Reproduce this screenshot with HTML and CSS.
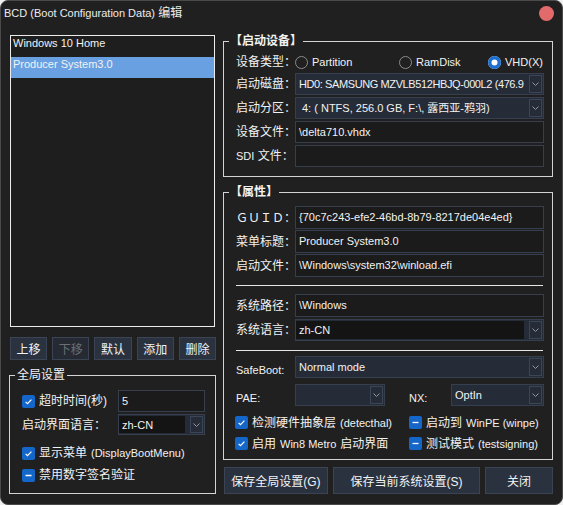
FILE: index.html
```html
<!DOCTYPE html>
<html lang="zh-CN">
<head>
    <meta charset="UTF-8">
    <title>BCD 编辑</title>
    <link rel="stylesheet" href="styles.css">
</head>
<body>
    <div class="window">
        <div class="titlebar">
            <span class="title"><span class="en">BCD (Boot Configuration Data)</span> 编辑</span>
            <span class="close"></span>
        </div>
        <div class="main">
            <div class="left">
                <ul class="entries">
                    <li>Windows 10 Home</li>
                    <li class="selected">Producer System3.0</li>
                </ul>
                <div class="entry-buttons">
                    <button class="btn">上移</button>
                    <button class="btn" disabled>下移</button>
                    <button class="btn">默认</button>
                    <button class="btn">添加</button>
                    <button class="btn">删除</button>
                </div>
                <fieldset class="group global">
                    <legend>全局设置</legend>
                    <div class="grow first">
                        <span class="cb"><span class="box"><svg width="13" height="13" viewBox="0 0 13 13"><path d="M3.6 6.9 5.5 8.7 9.4 4.7" stroke="#fff" stroke-width="1.2" fill="none"/></svg></span>超时时间(秒)</span>
                        <div class="field">5</div>
                    </div>
                    <div class="grow second">
                        <span>启动界面语言：</span>
                        <div class="combo edit">
                            <span class="value">zh-CN</span>
                            <span class="arrow"><svg width="7" height="4" viewBox="0 0 7 4"><path d="M.5.5 3.5 3.5 6.5.5" stroke="#8f98a4" fill="none"/></svg></span>
                        </div>
                    </div>
                    <span class="cb line"><span class="box"><svg width="13" height="13" viewBox="0 0 13 13"><path d="M3.6 6.9 5.5 8.7 9.4 4.7" stroke="#fff" stroke-width="1.2" fill="none"/></svg></span>显示菜单 <span class="en">(DisplayBootMenu)</span></span>
                    <span class="cb line"><span class="box"><svg width="13" height="13" viewBox="0 0 13 13"><path d="M3.5 6.5h6" stroke="#fff" stroke-width="1.3"/></svg></span>禁用数字签名验证</span>
                </fieldset>
            </div>

            <div class="right">
                <fieldset class="group device">
                    <legend class="bold">【启动设备】</legend>
                    <div class="radios">
                        <span class="label">设备类型：</span>
                        <span class="radio"><i></i>Partition</span>
                        <span class="radio"><i></i>RamDisk</span>
                        <span class="radio on"><i></i>VHD(X)</span>
                    </div>
                    <div class="row">
                        <span class="label">启动磁盘：</span>
                        <div class="combo">
                            <span class="value tight">HD0: SAMSUNG MZVLB512HBJQ-000L2 (476.9</span>
                            <span class="arrow"><svg width="7" height="4" viewBox="0 0 7 4"><path d="M.5.5 3.5 3.5 6.5.5" stroke="#8f98a4" fill="none"/></svg></span>
                        </div>
                    </div>
                    <div class="row">
                        <span class="label">启动分区：</span>
                        <div class="combo">
                            <span class="value indent">4: ( NTFS, 256.0 GB, F:\, 露西亚-鸦羽)</span>
                            <span class="arrow"><svg width="7" height="4" viewBox="0 0 7 4"><path d="M.5.5 3.5 3.5 6.5.5" stroke="#8f98a4" fill="none"/></svg></span>
                        </div>
                    </div>
                    <div class="row">
                        <span class="label">设备文件：</span>
                        <div class="field">\delta710.vhdx</div>
                    </div>
                    <div class="row">
                        <span class="label"><span class="en">SDI</span> 文件：</span>
                        <div class="field"></div>
                    </div>
                </fieldset>

                <fieldset class="group props">
                    <legend class="bold">【属性】</legend>
                    <div class="row tall">
                        <span class="label">ＧＵＩＤ：</span>
                        <div class="field">{70c7c243-efe2-46bd-8b79-8217de04e4ed}</div>
                    </div>
                    <div class="row tall">
                        <span class="label">菜单标题：</span>
                        <div class="field">Producer System3.0</div>
                    </div>
                    <div class="row tall">
                        <span class="label">启动文件：</span>
                        <div class="field">\Windows\system32\winload.efi</div>
                    </div>
                    <hr class="sep first">
                    <div class="row tall path">
                        <span class="label">系统路径：</span>
                        <div class="field">\Windows</div>
                    </div>
                    <div class="row">
                        <span class="label">系统语言：</span>
                        <div class="combo edit">
                            <span class="value">zh-CN</span>
                            <span class="arrow"><svg width="7" height="4" viewBox="0 0 7 4"><path d="M.5.5 3.5 3.5 6.5.5" stroke="#8f98a4" fill="none"/></svg></span>
                        </div>
                    </div>
                    <hr class="sep second">
                    <div class="row safe">
                        <span class="label low en">SafeBoot:</span>
                        <div class="combo">
                            <span class="value">Normal mode</span>
                            <span class="arrow"><svg width="7" height="4" viewBox="0 0 7 4"><path d="M.5.5 3.5 3.5 6.5.5" stroke="#8f98a4" fill="none"/></svg></span>
                        </div>
                    </div>
                    <div class="row pae">
                        <span class="label low en">PAE:</span>
                        <div class="combo pae-box">
                            <span class="value"></span>
                            <span class="arrow"><svg width="7" height="4" viewBox="0 0 7 4"><path d="M.5.5 3.5 3.5 6.5.5" stroke="#8f98a4" fill="none"/></svg></span>
                        </div>
                        <span class="nx-label low en">NX:</span>
                        <div class="combo">
                            <span class="value">OptIn</span>
                            <span class="arrow"><svg width="7" height="4" viewBox="0 0 7 4"><path d="M.5.5 3.5 3.5 6.5.5" stroke="#8f98a4" fill="none"/></svg></span>
                        </div>
                    </div>
                    <div class="checks">
                        <span class="cb"><span class="box"><svg width="13" height="13" viewBox="0 0 13 13"><path d="M3.6 6.9 5.5 8.7 9.4 4.7" stroke="#fff" stroke-width="1.2" fill="none"/></svg></span>检测硬件抽象层<span class="en">(detecthal)</span></span>
                        <span class="cb"><span class="box"><svg width="13" height="13" viewBox="0 0 13 13"><path d="M3.5 6.5h6" stroke="#fff" stroke-width="1.3"/></svg></span>启动到 <span class="en">WinPE (winpe)</span></span>
                        <span class="cb"><span class="box"><svg width="13" height="13" viewBox="0 0 13 13"><path d="M3.6 6.9 5.5 8.7 9.4 4.7" stroke="#fff" stroke-width="1.2" fill="none"/></svg></span>启用 <span class="en">Win8 Metro</span> 启动界面</span>
                        <span class="cb"><span class="box"><svg width="13" height="13" viewBox="0 0 13 13"><path d="M3.5 6.5h6" stroke="#fff" stroke-width="1.3"/></svg></span>测试模式 <span class="en">(testsigning)</span></span>
                    </div>
                </fieldset>

                <div class="bottom-buttons">
                    <button class="btn save-global">保存全局设置(G)</button>
                    <button class="btn save-current">保存当前系统设置(S)</button>
                    <button class="btn close-btn">关闭</button>
                </div>
            </div>
        </div>
    </div>
</body>
</html>
```

FILE: styles.css
```css
body {
    margin: 0;
    background-color: #f0f0f0;
    color: #f2f2f2;
    font-family: "Liberation Sans", "Noto Sans CJK SC", sans-serif;
    font-size: 12px;
    line-height: 16px;
}
/* latin runs are a touch narrower than the CJK glyphs */
.en {
    font-size: 11px;
}
.window {
    width: 563px;
    height: 505px;
    box-sizing: border-box;
    background-color: #202020;
    border: 1px solid #4a4a4a;
    border-radius: 8px;
    overflow: hidden;
}
.titlebar {
    height: 32px;
    display: flex;
    justify-content: space-between;
    align-items: flex-start;
}
.title {
    margin: 4px 0 0 3px;
    line-height: 17px;
    color: #ececec;
}
.close {
    width: 15px;
    height: 15px;
    margin: 5px 8px 0 0;
    border-radius: 50%;
    background-color: #e26a6a;
}
.main {
    display: flex;
    gap: 7px;
    padding-left: 8px;
}
.left {
    width: 207px;
    display: flex;
    flex-direction: column;
}
.right {
    width: 330px;
    display: flex;
    flex-direction: column;
}

/* list of boot entries */
.entries {
    list-style: none;
    margin: 2px 0 0 1px;
    padding: 0;
    width: 205px;
    height: 292px;
    box-sizing: border-box;
    border: 1px solid #ececec;
    background-color: #1e1e1e;
    font-size: 11px;
}
.entries li {
    height: 21px;
    line-height: 15px;
    padding-left: 2px;
}
.entries .selected {
    background-color: #68a0e2;
}

.btn {
    font-family: inherit;
    font-size: 12px;
    color: #f2f2f2;
    background-color: #2a3240;
    border: 1px solid #3a4454;
    padding: 0;
    cursor: pointer;
}
.btn:disabled {
    color: #6b6f75;
    background-color: #262b33;
}
.entry-buttons {
    display: flex;
    gap: 5px;
    margin: 10px 0 0 1px;
    height: 23px;
}
.entry-buttons .btn {
    flex: 1;
}

/* group boxes */
.group {
    margin: 0;
    border: 1px solid #d4d4d4;
    min-width: 0;
}
.group legend {
    padding: 0 1px;
    line-height: 16px;
}
.group .bold {
    font-weight: bold;
}
.global {
    margin-top: 7px;
    padding: 7px 9px 8px 12px;
}
.global legend {
    margin-left: -7px;
    padding: 0 2px;
}
.device {
    padding: 4px 8px 9px 12px;
}
.device legend,
.props legend {
    margin-left: -7px;
}
.props {
    margin-top: 7px;
    padding: 4px 8px 5px 12px;
}

.grow {
    display: grid;
    grid-template-columns: 96px 87px;
    align-items: center;
}
.grow.first {
    height: 22px;
}
.grow.second {
    height: 21px;
    margin-top: 2px;
}
.global .line {
    height: 20px;
}
.global .line:nth-of-type(1) {
    margin-top: 8px;
}
.cb.line + .cb.line {
    margin-top: 2px;
}

.row {
    display: flex;
    align-items: center;
    height: 22px;
    margin-top: 2px;
}
.row.tall {
    height: 23px;
}
.row.tall + .row.tall {
    margin-top: 1px;
}
.row.path {
    margin-top: 8px;
}
.row.safe {
    margin-top: 5px;
}
.row.pae {
    margin-top: 6px;
}
.label {
    width: 59px;
    flex: none;
    white-space: nowrap;
}
.low {
    margin-top: 6px;
}
.nx-label {
    width: 42px;
    margin-left: 24px;
}

.radios {
    display: grid;
    grid-template-columns: 59px 104px 89px 1fr;
    align-items: center;
    height: 18px;
}
.radio {
    display: flex;
    align-items: center;
    gap: 4px;
    font-size: 11px;
}
.radio i {
    width: 13px;
    height: 13px;
    box-sizing: border-box;
    border: 1px solid #8a8a8a;
    border-radius: 50%;
}
.radio.on i {
    border: none;
    background-color: #fff;
    box-shadow: inset 0 0 0 3.5px #1a6fd0;
}

.field {
    flex: 1;
    height: 100%;
    box-sizing: border-box;
    border: 1px solid #353f4d;
    background-color: #1b1b1b;
    padding: 0 3px;
    line-height: 20px;
    font-size: 11px;
    white-space: nowrap;
    overflow: hidden;
}
.combo {
    flex: 1;
    height: 100%;
    box-sizing: border-box;
    display: flex;
    border: 1px solid #353f4d;
    background-color: #252c38;
    overflow: hidden;
}
.combo .value {
    flex: 1;
    padding-left: 3px;
    line-height: 20px;
    font-size: 11px;
    white-space: nowrap;
    overflow: hidden;
}
.combo .tight {
    letter-spacing: -0.4px;
}
.combo .indent {
    padding-left: 6px;
}
.combo .arrow {
    width: 13px;
    flex: none;
    margin: 1px 1px 1px 2px;
    box-sizing: border-box;
    border: 1px solid #3a4556;
    display: flex;
    align-items: center;
    justify-content: center;
}
.combo.edit .value {
    margin: 1px 3px 1px 0;
    padding-left: 3px;
    line-height: 18px;
    background-color: #141414;
}
.pae-box {
    flex: none;
    width: 90px;
}

.sep {
    margin: 0;
    border: none;
    border-top: 1px solid #e6e6e6;
    margin-right: 1px;
}
.sep.first {
    margin-top: 8px;
}
.sep.second {
    margin-top: 9px;
}

.cb {
    display: flex;
    align-items: center;
    gap: 4px;
    white-space: nowrap;
}
.cb .box {
    width: 13px;
    height: 13px;
    flex: none;
    border-radius: 2px;
    background-color: #1466c9;
    display: flex;
}
.checks {
    display: grid;
    grid-template-columns: 174px 1fr;
    grid-auto-rows: 21px;
    align-items: center;
    margin: 6px 0 0 -1px;
}

.bottom-buttons {
    display: flex;
    gap: 5px;
    margin: 7px 0 0 1px;
    height: 27px;
}
.save-global {
    width: 104px;
}
.save-current {
    width: 148px;
}
.close-btn {
    width: 68px;
}
```
